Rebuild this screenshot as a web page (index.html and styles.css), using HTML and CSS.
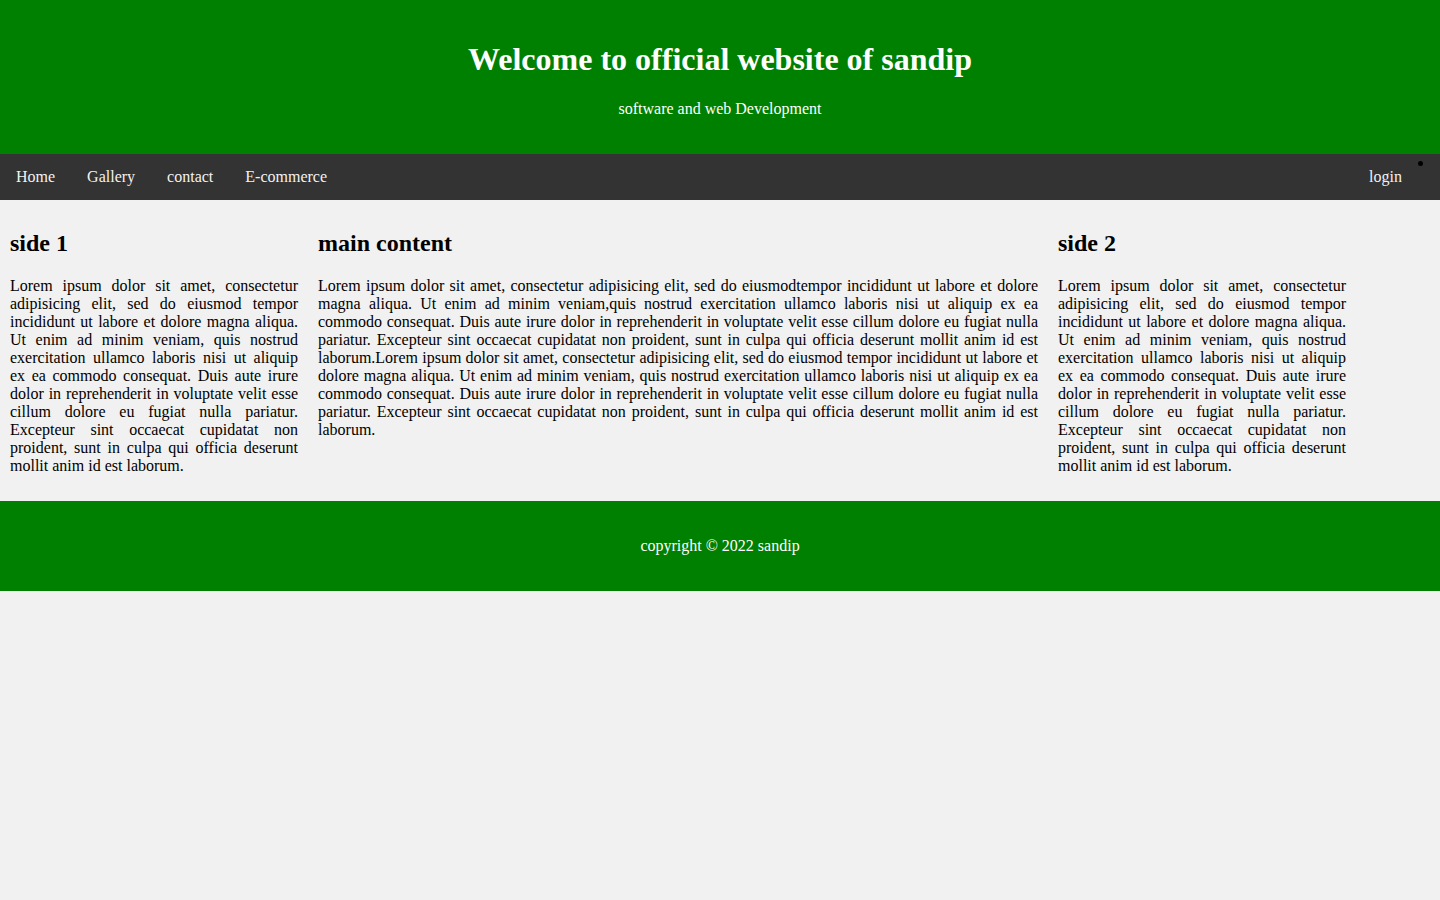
FILE: index.html
```html
<!DOCTYPE html>
<html>
<head>
<meta charset="utf-8">
<title>sandip</title>
<link rel="stylesheet" href="styles.css">
</head>
<body>
<div class="header">
  <h1>Welcome to official website of sandip</h1>
  <p>software and web Development</p>
</div>
<div class="topnav">
  <a href="#">Home</a>
  <a href="#">Gallery</a>
  <a href="#">contact</a>
  <a href="#">E-commerce</a>
  <a href="#" class="right">login</a>
  <span class="dot"></span>
</div>
<div class="row">
  <div class="column side">
    <h2>side 1</h2>
    <p>Lorem ipsum dolor sit amet, consectetur adipisicing elit, sed do eiusmod tempor incididunt ut labore et dolore magna aliqua. Ut enim ad minim veniam, quis nostrud exercitation ullamco laboris nisi ut aliquip ex ea commodo consequat. Duis aute irure dolor in reprehenderit in voluptate velit esse cillum dolore eu fugiat nulla pariatur. Excepteur sint occaecat cupidatat non proident, sunt in culpa qui officia deserunt mollit anim id est laborum.</p>
  </div>
  <div class="column middle">
    <h2>main content</h2>
    <p>Lorem ipsum dolor sit amet, consectetur adipisicing elit, sed do eiusmodtempor incididunt ut labore et dolore magna aliqua. Ut enim ad minim veniam,quis nostrud exercitation ullamco laboris nisi ut aliquip ex ea commodo consequat. Duis aute irure dolor in reprehenderit in voluptate velit esse cillum dolore eu fugiat nulla pariatur. Excepteur sint occaecat cupidatat non proident, sunt in culpa qui officia deserunt mollit anim id est laborum.Lorem ipsum dolor sit amet, consectetur adipisicing elit, sed do eiusmod tempor incididunt ut labore et dolore magna aliqua. Ut enim ad minim veniam, quis nostrud exercitation ullamco laboris nisi ut aliquip ex ea commodo consequat. Duis aute irure dolor in reprehenderit in voluptate velit esse cillum dolore eu fugiat nulla pariatur. Excepteur sint occaecat cupidatat non proident, sunt in culpa qui officia deserunt mollit anim id est laborum.</p>
  </div>
  <div class="column side">
    <h2>side 2</h2>
    <p>Lorem ipsum dolor sit amet, consectetur adipisicing elit, sed do eiusmod tempor incididunt ut labore et dolore magna aliqua. Ut enim ad minim veniam, quis nostrud exercitation ullamco laboris nisi ut aliquip ex ea commodo consequat. Duis aute irure dolor in reprehenderit in voluptate velit esse cillum dolore eu fugiat nulla pariatur. Excepteur sint occaecat cupidatat non proident, sunt in culpa qui officia deserunt mollit anim id est laborum.</p>
  </div>
</div>
<div class="footer">
  <p>copyright &copy; 2022 sandip</p>
</div>
</body>
</html>
```
FILE: styles.css
```css
* {
  box-sizing: content-box;
}
body {
  margin: 0;
  background: #f1f1f1;
  font-family: "Liberation Serif", "Times New Roman", serif;
  font-size: 16px;
}
.header {
  background: #008000;
  color: #fff;
  text-align: center;
  padding: 20px;
}
.header h1 {
  font-size: 32px;
  margin: 21.44px 0;
}
.header p {
  margin: 16px 0;
}
.topnav {
  background: #333;
  display: flex;
  position: relative;
}
.topnav a {
  color: #f2f2f2;
  text-decoration: none;
  padding: 14px 16px;
  line-height: 18px;
}
.topnav a.right {
  margin-left: auto;
  margin-right: 22px;
}
.topnav .dot {
  position: absolute;
  right: 17px;
  top: 7px;
  width: 5px;
  height: 5px;
  border-radius: 50%;
  background: #000;
}
.row {
  display: flex;
  align-items: flex-start;
}
.column {
  padding: 10px;
}
.side {
  width: 20%;
}
.middle {
  width: 50%;
}
.column h2 {
  font-size: 24px;
  margin: 19.92px 0;
}
.column p {
  text-align: justify;
  margin: 16px 0;
}
.footer {
  background: #008000;
  color: #fff;
  text-align: center;
  padding: 20px;
}
.footer p {
  margin: 16px 0;
}
```
